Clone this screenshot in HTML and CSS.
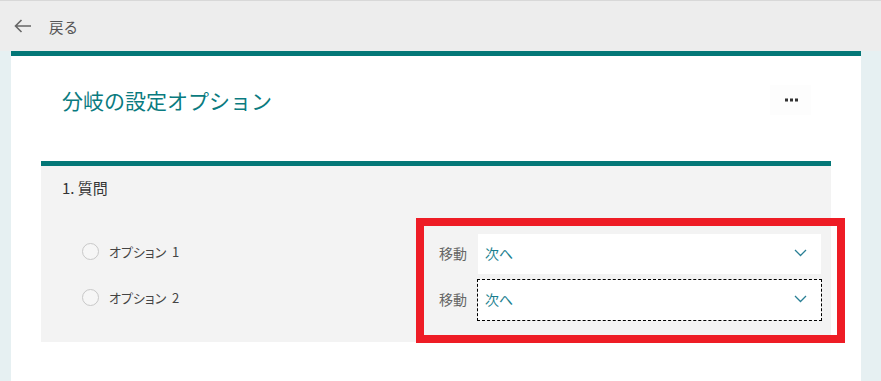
FILE: index.html
```html
<!DOCTYPE html>
<html lang="ja">
<head>
    <meta charset="UTF-8">
    <title>分岐の設定オプション</title>
    <link rel="stylesheet" href="styles.css">
</head>
<body>
    <header class="topbar">
        <a class="back_link" href="#">
            <svg class="back_icon" width="18" height="14" viewBox="0 0 18 14">
                <path d="M17 7H1.5M7.5 1L1.5 7l6 6" fill="none" stroke="#666" stroke-width="1.6"/>
            </svg>
            <span>戻る</span>
        </a>
    </header>

    <div class="page">
        <div class="card">
            <div class="title_row">
                <h1 class="title">分岐の設定オプション</h1>
                <button class="more_btn">
                    <svg width="14" height="4" viewBox="0 0 14 4">
                        <rect x="1" y="0.5" width="3" height="3" fill="#333"/>
                        <rect x="6" y="0.5" width="3" height="3" fill="#333"/>
                        <rect x="11" y="0.5" width="3" height="3" fill="#333"/>
                    </svg>
                </button>
            </div>

            <div class="question">
                <h2 class="question_title">1. 質問</h2>
                <div class="options">
                    <div class="option_row">
                        <div class="option">
                            <span class="radio"></span>
                            <span class="option_text">オプション 1</span>
                        </div>
                        <div class="goto">
                            <span class="goto_label">移動</span>
                            <div class="select">
                                <span>次へ</span>
                                <svg width="13" height="8" viewBox="0 0 13 8"><path d="M1 1l5.5 5.5L12 1" fill="none" stroke="#2a7f95" stroke-width="1.3"/></svg>
                            </div>
                        </div>
                    </div>
                    <div class="option_row">
                        <div class="option">
                            <span class="radio"></span>
                            <span class="option_text">オプション 2</span>
                        </div>
                        <div class="goto">
                            <span class="goto_label">移動</span>
                            <div class="select focused">
                                <span>次へ</span>
                                <svg width="13" height="8" viewBox="0 0 13 8"><path d="M1 1l5.5 5.5L12 1" fill="none" stroke="#2a7f95" stroke-width="1.3"/></svg>
                            </div>
                        </div>
                    </div>
                </div>
                <div class="highlight"></div>
            </div>
        </div>
    </div>
</body>
</html>
```

FILE: styles.css
```css
html, body {
    height: 100%;
    margin: 0;
    padding: 0;
    overflow: hidden;
}

body {
    background: #e6f0f2;
    font-family: "Noto Sans CJK JP", "Noto Sans", sans-serif;
    color: #333;
}

.topbar {
    height: 50px;
    border-top: 1px solid #d8d8d8;
    background: #ededed;
    display: flex;
    align-items: center;
    padding-left: 14px;
}

.back_link {
    display: flex;
    align-items: center;
    gap: 17px;
    color: #555;
    font-size: 14.5px;
    text-decoration: none;
}

.page {
    padding: 0 20px 0 11px;
    height: calc(100% - 51px);
}

.card {
    background: #fff;
    border-top: 5px solid #047777;
    height: 100%;
    box-sizing: border-box;
}

.title_row {
    display: flex;
    justify-content: space-between;
    align-items: center;
    height: 30px;
    margin: 29px 50px 0 51px;
}

.title {
    margin: 0;
    font-size: 21px;
    font-weight: normal;
    color: #0a7b80;
}

.more_btn {
    width: 41px;
    height: 30px;
    border: none;
    background: #fdfdfd;
    padding: 0;
    display: flex;
    align-items: center;
    justify-content: center;
}

.question {
    position: relative;
    margin: 46px 30px 0 30px;
    border-top: 5px solid #047777;
    background: #f3f3f3;
    padding: 12px 10px 22px 0;
}

.question_title {
    margin: 0 0 0 21px;
    font-size: 15px;
    line-height: 20px;
    font-weight: normal;
    color: #333;
}

.options {
    margin-top: 36px;
    display: flex;
    flex-direction: column;
    gap: 6px;
}

.option_row {
    display: flex;
    justify-content: space-between;
    align-items: center;
}

.option {
    display: flex;
    align-items: center;
    gap: 10px;
    margin-left: 41px;
    padding-bottom: 6px;
}

.radio {
    width: 15px;
    height: 15px;
    border: 1px solid #c8c8c8;
    border-radius: 50%;
    background: #f6f6f6;
}

.option_text {
    font-size: 13px;
    font-feature-settings: "palt";
    word-spacing: 3px;
    color: #444;
}

.goto {
    display: flex;
    align-items: center;
    gap: 11px;
}

.goto_label {
    font-size: 14px;
    color: #666;
    padding-bottom: 3px;
}

.select {
    width: 343px;
    height: 40px;
    box-sizing: border-box;
    background: #fff;
    display: flex;
    align-items: center;
    justify-content: space-between;
    padding: 0 14px 3px 7px;
    font-size: 14px;
    color: #1b7f8f;
}

.select.focused {
    outline: 1px dashed #000;
}

.highlight {
    position: absolute;
    left: 375px;
    top: 52px;
    width: 429px;
    height: 125px;
    box-sizing: border-box;
    border: 8px solid #ee1c25;
    pointer-events: none;
}
```
